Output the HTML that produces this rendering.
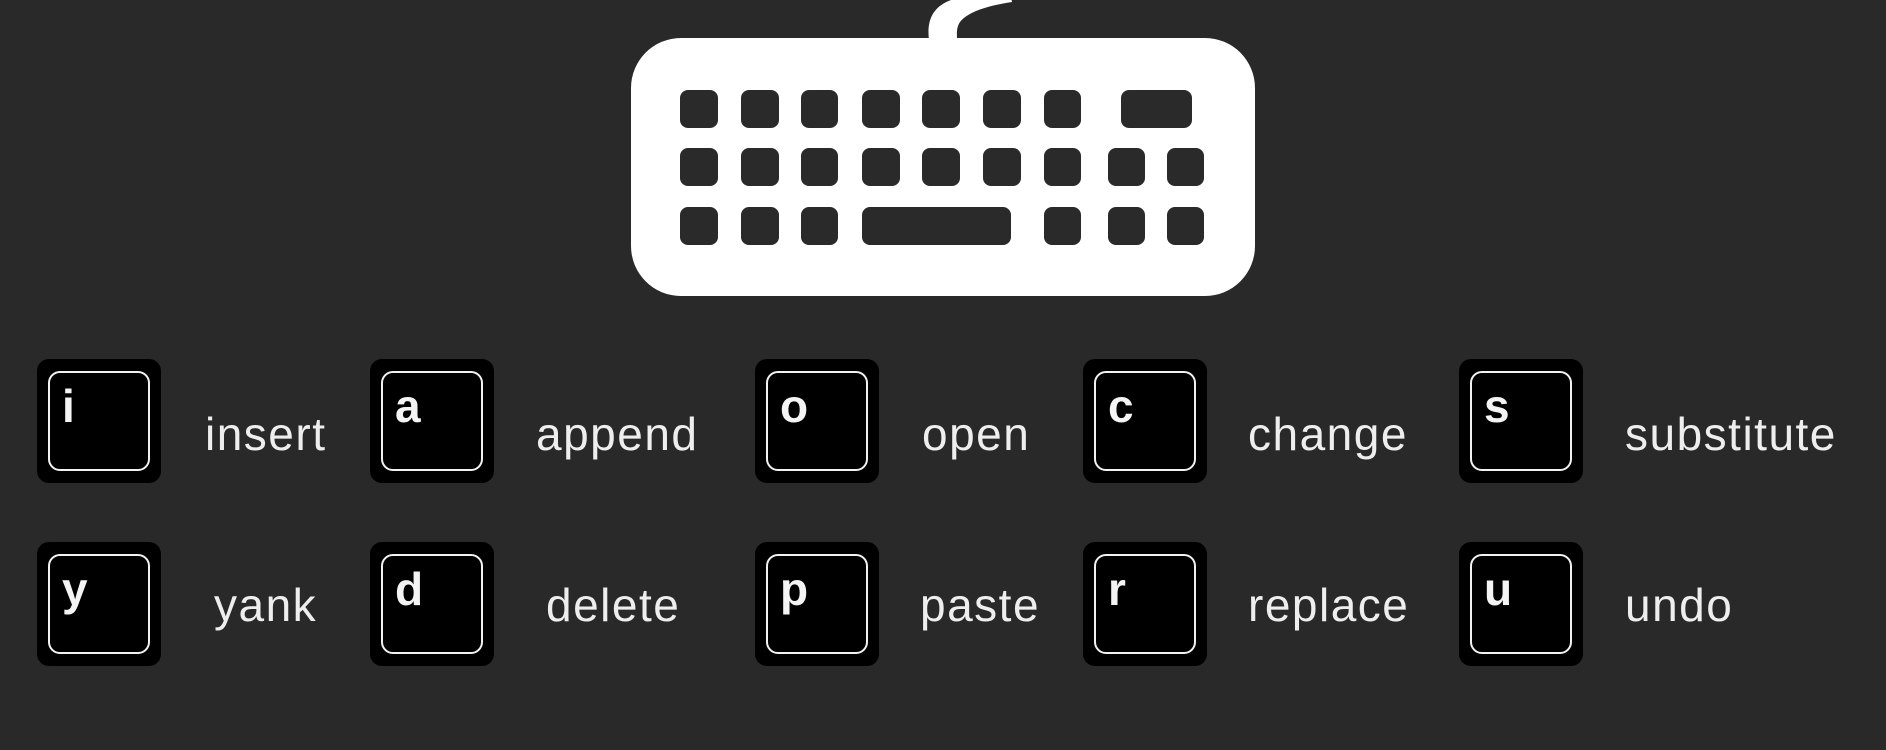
<!DOCTYPE html>
<html><head><meta charset="utf-8"><style>
html,body{margin:0;padding:0}
body{width:1886px;height:750px;background:#292929;position:relative;overflow:hidden;font-family:"Liberation Sans",sans-serif}
.k{position:absolute;width:124px;height:124px;background:#000;border-radius:12px}
.k i{position:absolute;left:11px;top:12px;width:98px;height:96px;border:2.5px solid #f2f2f2;border-radius:12px;box-sizing:content-box}
.k b{position:absolute;left:25px;top:22px;color:#f4f4f4;font-size:46px;font-weight:bold;line-height:50px}
.l{position:absolute;color:#eeeeee;font-size:46px;letter-spacing:1.5px;line-height:46px}
</style></head><body>
<svg width="1886" height="300" style="position:absolute;left:0;top:0">
<path d="M929 40 C926 16 936 2 962 -3 L1010 -8 L1012 2 C986 6 968 12 960 22 C956 28 957 34 957 40 Z" fill="#fff"/>
<rect x="631" y="38" width="624" height="258" rx="50" fill="#fff"/>
<g fill="#2a2a2a">
<rect x="680" y="90" width="38" height="38" rx="8"/><rect x="741" y="90" width="38" height="38" rx="8"/><rect x="801" y="90" width="37" height="38" rx="8"/><rect x="862" y="90" width="38" height="38" rx="8"/><rect x="922" y="90" width="38" height="38" rx="8"/><rect x="983" y="90" width="38" height="38" rx="8"/><rect x="1044" y="90" width="37" height="38" rx="8"/><rect x="1121" y="90" width="71" height="38" rx="8"/>
<rect x="680" y="148" width="38" height="38" rx="8"/><rect x="741" y="148" width="38" height="38" rx="8"/><rect x="801" y="148" width="37" height="38" rx="8"/><rect x="862" y="148" width="38" height="38" rx="8"/><rect x="922" y="148" width="38" height="38" rx="8"/><rect x="983" y="148" width="38" height="38" rx="8"/><rect x="1044" y="148" width="37" height="38" rx="8"/><rect x="1108" y="148" width="37" height="38" rx="8"/><rect x="1167" y="148" width="37" height="38" rx="8"/>
<rect x="680" y="207" width="38" height="38" rx="8"/><rect x="741" y="207" width="38" height="38" rx="8"/><rect x="801" y="207" width="37" height="38" rx="8"/><rect x="862" y="207" width="149" height="38" rx="8"/><rect x="1044" y="207" width="37" height="38" rx="8"/><rect x="1108" y="207" width="37" height="38" rx="8"/><rect x="1167" y="207" width="37" height="38" rx="8"/>
</g></svg>

<div class="k" style="left:37px;top:359px"><i></i><b>i</b></div>
<div class="l" style="left:205px;top:411px">insert</div>
<div class="k" style="left:370px;top:359px"><i></i><b>a</b></div>
<div class="l" style="left:536px;top:411px">append</div>
<div class="k" style="left:755px;top:359px"><i></i><b>o</b></div>
<div class="l" style="left:922px;top:411px">open</div>
<div class="k" style="left:1083px;top:359px"><i></i><b>c</b></div>
<div class="l" style="left:1248px;top:411px">change</div>
<div class="k" style="left:1459px;top:359px"><i></i><b>s</b></div>
<div class="l" style="left:1625px;top:411px">substitute</div>

<div class="k" style="left:37px;top:542px"><i></i><b>y</b></div>
<div class="l" style="left:214px;top:582px">yank</div>
<div class="k" style="left:370px;top:542px"><i></i><b>d</b></div>
<div class="l" style="left:546px;top:582px">delete</div>
<div class="k" style="left:755px;top:542px"><i></i><b>p</b></div>
<div class="l" style="left:920px;top:582px">paste</div>
<div class="k" style="left:1083px;top:542px"><i></i><b>r</b></div>
<div class="l" style="left:1248px;top:582px">replace</div>
<div class="k" style="left:1459px;top:542px"><i></i><b>u</b></div>
<div class="l" style="left:1625px;top:582px">undo</div>
</body></html>
